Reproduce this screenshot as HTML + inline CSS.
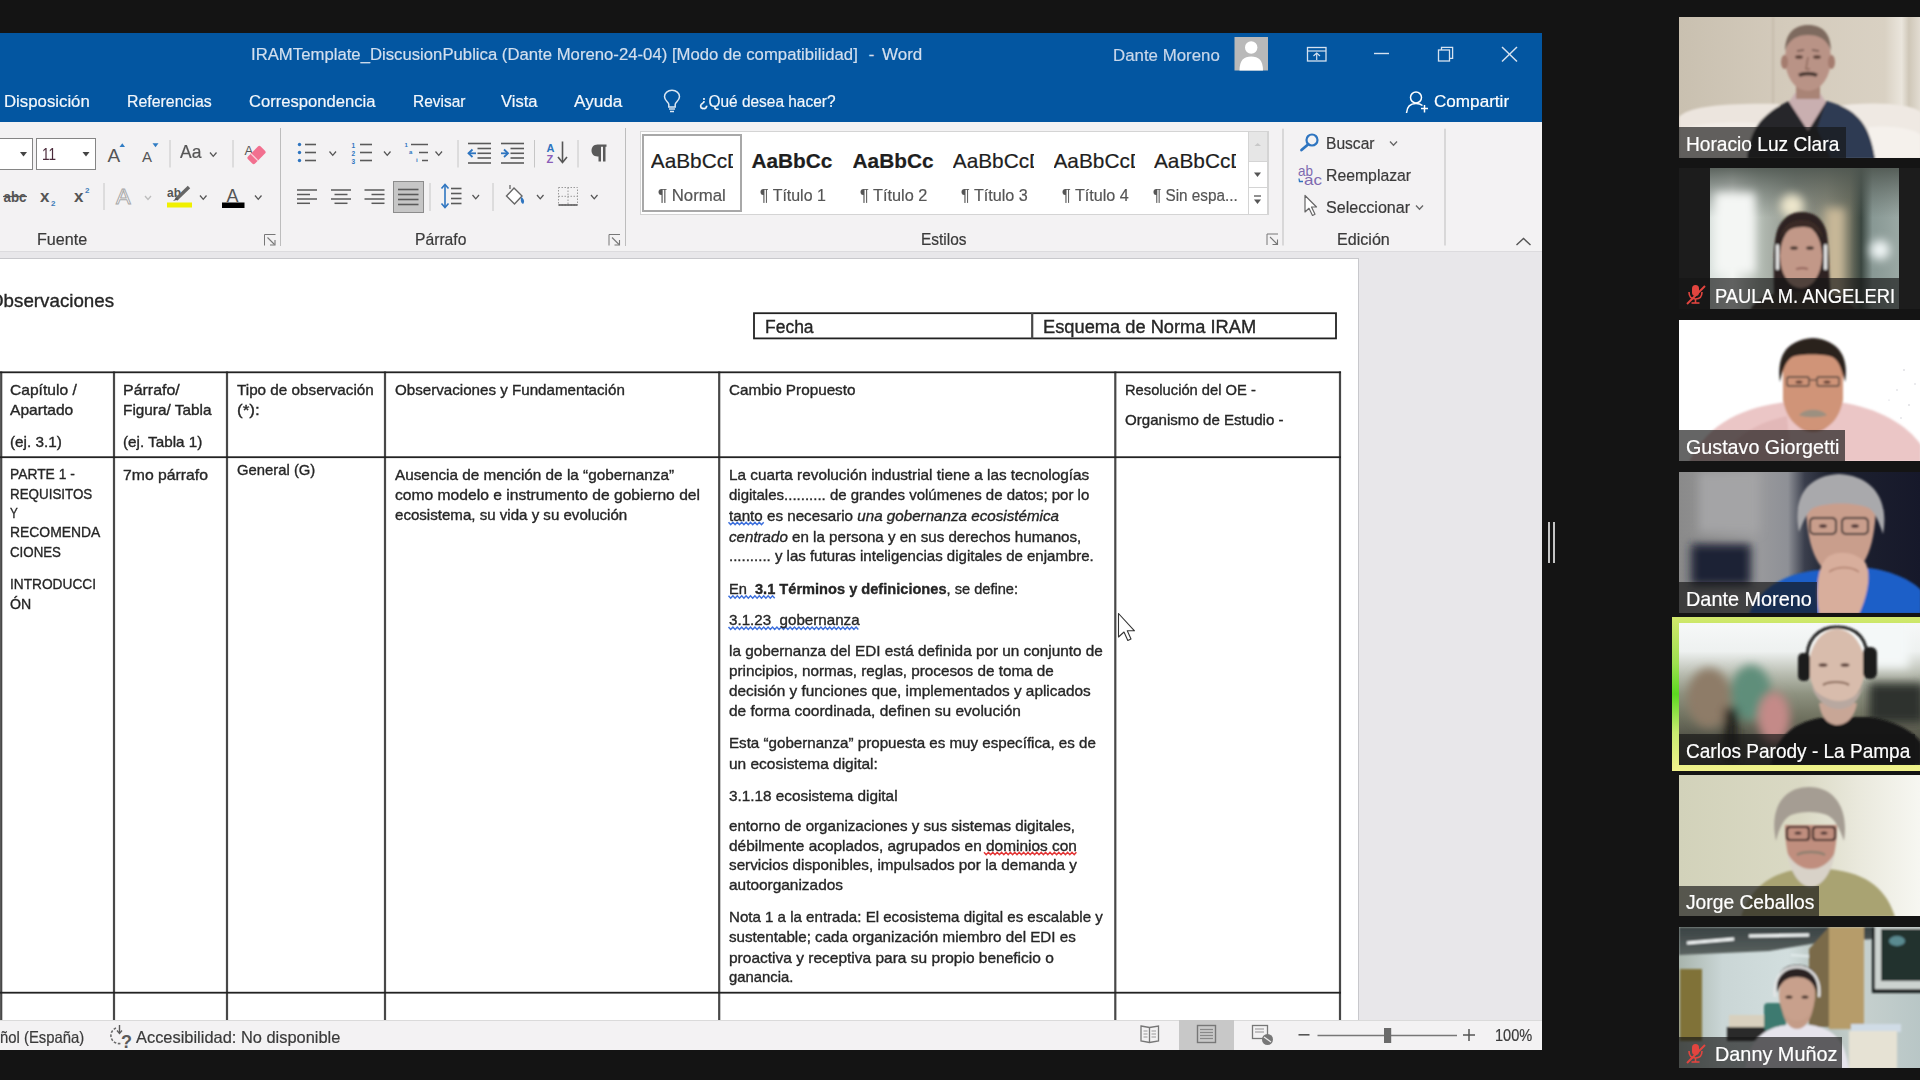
<!DOCTYPE html>
<html><head><meta charset="utf-8"><title>Zoom - Word</title>
<style>
*{margin:0;padding:0;box-sizing:border-box}
html,body{width:1920px;height:1080px;overflow:hidden}
body{background:#141414;position:relative;font-family:"Liberation Sans",sans-serif}
.a{position:absolute}
.t{position:absolute;white-space:nowrap;line-height:1;transform-origin:0 0}
svg{position:absolute;overflow:visible}
</style></head><body>

<!-- Word window -->
<div class="a" style="left:0;top:33px;width:1542px;height:89px;background:#0356A1"></div>
<div class="a" style="left:0;top:122px;width:1542px;height:129px;background:#F3F2F3"></div>
<div class="a" style="left:0;top:251px;width:1542px;height:2px;background:#DCDBDE"></div>
<div class="a" style="left:0;top:252px;width:1542px;height:768px;background:#E8E7EA"></div>
<div class="a" style="left:0;top:258px;width:1359px;height:762px;background:#FFFFFF;border-top:1px solid #C8C8CC;border-right:1px solid #C8C8CC"></div>
<div class="a" style="left:0;top:1020px;width:1542px;height:30px;background:#F3F2F3;border-top:1px solid #DADADA"></div>
<!-- status active view button -->
<div class="a" style="left:1179px;top:1020px;width:55px;height:30px;background:#C8C8C8"></div>
<!-- ribbon controls backgrounds -->
<div class="a" style="left:-4px;top:138px;width:37px;height:32px;background:#fff;border:1.5px solid #858585"></div>
<div class="a" style="left:36px;top:138px;width:60px;height:32px;background:#fff;border:1.5px solid #858585"></div>
<div class="a" style="left:639.5px;top:131px;width:629px;height:84px;background:#fff;border:1px solid #D4D4D4"></div>
<div class="a" style="left:642px;top:134px;width:100px;height:78px;background:#fff;border:2px solid #A8A8A8;box-shadow:inset 0 0 0 1px #fff"></div>
<div class="a" style="left:1248px;top:131px;width:20px;height:84px;background:#fff;border:1px solid #D4D4D4"></div>
<div class="a" style="left:1249px;top:132px;width:18px;height:29px;background:#E6E6E6"></div>
<div class="a" style="left:1248px;top:161px;width:20px;height:1px;background:#D4D4D4"></div>
<div class="a" style="left:1248px;top:187px;width:20px;height:1px;background:#D4D4D4"></div>
<div class="a" style="left:393px;top:181px;width:31px;height:32px;background:#C6C6C6;border:1px solid #8C8C8C"></div>
<svg class="a" style="left:0;top:0" width="1920" height="1080" viewBox="0 0 1920 1080"><rect x="1234.5" y="37" width="33.5" height="33.5" fill="#B9B9B9"/><circle cx="1251.2" cy="47.5" r="6.2" fill="#fff"/><path d="M1239.5 70.5 C1239.5 60 1244 56.5 1251.2 56.5 C1258.5 56.5 1263 60 1263 70.5 Z" fill="#fff"/><rect x="1307.5" y="47.5" width="18.5" height="13.5" fill="none" stroke="#D6E2F0" stroke-width="1.3"/><line x1="1307.5" y1="51" x2="1326" y2="51" stroke="#D6E2F0" stroke-width="1.2"/><polyline points="1313.5,56 1316.7,53 1320,56" fill="none" stroke="#D6E2F0" stroke-width="1.2"/><line x1="1316.7" y1="53" x2="1316.7" y2="60" stroke="#D6E2F0" stroke-width="1.2"/><line x1="1374" y1="53.5" x2="1389" y2="53.5" stroke="#D6E2F0" stroke-width="1.4"/><rect x="1438.5" y="50" width="11" height="11" fill="none" stroke="#D6E2F0" stroke-width="1.3"/><polyline points="1441.5,50 1441.5,47.3 1452.6,47.3 1452.6,58.3 1449.5,58.3" fill="none" stroke="#D6E2F0" stroke-width="1.3"/><line x1="1502" y1="47" x2="1517" y2="61.5" stroke="#D6E2F0" stroke-width="1.5"/><line x1="1517" y1="47" x2="1502" y2="61.5" stroke="#D6E2F0" stroke-width="1.5"/><circle cx="1416" cy="97.5" r="5.5" fill="none" stroke="#fff" stroke-width="1.5"/><path d="M1406.5 113 C1407 106 1410.5 103.5 1416 103.5 C1419 103.5 1421 104.3 1422.5 105.5" fill="none" stroke="#fff" stroke-width="1.5"/><line x1="1421" y1="108.5" x2="1428" y2="108.5" stroke="#fff" stroke-width="1.5"/><line x1="1424.5" y1="105" x2="1424.5" y2="112.5" stroke="#fff" stroke-width="1.5"/><path d="M668.8 107 L668.8 104.5 C668.8 102.5 664.5 100.5 664.5 96.8 C664.5 92.8 667.8 90.3 672 90.3 C676.2 90.3 679.5 92.8 679.5 96.8 C679.5 100.5 675.2 102.5 675.2 104.5 L675.2 107 Z" fill="none" stroke="#DCE7F3" stroke-width="1.5"/><line x1="669" y1="109" x2="675" y2="109" stroke="#DCE7F3" stroke-width="1.4"/><line x1="670" y1="111.5" x2="674" y2="111.5" stroke="#DCE7F3" stroke-width="1.5"/><polygon points="20,152 27,152 23.5,156.5" fill="#444"/><polygon points="82.5,152 89.5,152 86.0,156.5" fill="#444"/><text x="107.5" y="161.7" font-family="Liberation Sans" font-size="19" fill="#555">A</text><polygon points="119.5,147 122.3,143.2 125,147" fill="#2F7CC4"/><text x="142" y="161.7" font-family="Liberation Sans" font-size="15" fill="#555">A</text><polygon points="152.5,143.3 158.5,143.3 155.5,147.3" fill="#2F7CC4"/><line x1="170" y1="140" x2="170" y2="167.5" stroke="#C6C6C6" stroke-width="1"/><polyline points="210,152.5 213.25,156.3 216.5,152.5" fill="none" stroke="#555" stroke-width="1.3"/><line x1="233" y1="140" x2="233" y2="167.5" stroke="#C6C6C6" stroke-width="1"/><text x="244.5" y="155" font-family="Liberation Sans" font-size="13" fill="#555">A</text><g transform="translate(256.5,155) rotate(-45)"><rect x="-9" y="-5" width="18" height="10" rx="2" fill="#F2708F"/><line x1="-3" y1="-5" x2="-3" y2="5" stroke="#F9D0DA" stroke-width="1.3"/></g><line x1="280.5" y1="128" x2="280.5" y2="246" stroke="#BDBDBD" stroke-width="1"/><text x="3.5" y="202" font-family="Liberation Sans" font-size="14.5" font-weight="bold" fill="#555" textLength="23" lengthAdjust="spacingAndGlyphs">abc</text><line x1="3" y1="196.5" x2="27" y2="196.5" stroke="#555" stroke-width="1.2"/><text x="40" y="202" font-family="Liberation Sans" font-size="17" font-weight="bold" fill="#555">x</text><text x="51" y="205.5" font-family="Liberation Sans" font-size="8" font-weight="bold" fill="#3C7AB8">2</text><text x="74" y="202" font-family="Liberation Sans" font-size="17" font-weight="bold" fill="#555">x</text><text x="85" y="192.5" font-family="Liberation Sans" font-size="8" font-weight="bold" fill="#3C7AB8">2</text><line x1="104" y1="183" x2="104" y2="210" stroke="#C6C6C6" stroke-width="1"/><text x="116" y="204" font-family="Liberation Sans" font-size="22" fill="#fff" stroke="#A8A8A8" stroke-width="1">A</text><polyline points="145,196 148.0,199.5 151,196" fill="none" stroke="#BDBDBD" stroke-width="1.3"/><text x="167" y="197" font-family="Liberation Sans" font-size="12" font-weight="bold" fill="#555">ab</text><line x1="176" y1="199.5" x2="189" y2="187" stroke="#666" stroke-width="3.5"/><polygon points="173,201 176.5,197.5 178.5,199.5" fill="#555"/><rect x="167" y="202.5" width="25" height="5" fill="#F0F000"/><polyline points="200,195.5 203.25,199.3 206.5,195.5" fill="none" stroke="#555" stroke-width="1.3"/><text x="226.5" y="202" font-family="Liberation Sans" font-size="18" fill="#555">A</text><rect x="222" y="202.5" width="22.5" height="5.5" fill="#000"/><polyline points="255,195.5 258.25,199.3 261.5,195.5" fill="none" stroke="#555" stroke-width="1.3"/><polyline points="264.5,245.5 264.5,234.5 275.5,234.5" fill="none" stroke="#777" stroke-width="1"/><line x1="267.5" y1="237.5" x2="274.5" y2="244.5" stroke="#777" stroke-width="1.1"/><polyline points="270.0,245.0 275.0,245.0 275.0,240.0" fill="none" stroke="#777" stroke-width="1.1"/><polyline points="609,245.5 609,234.5 620,234.5" fill="none" stroke="#777" stroke-width="1"/><line x1="612" y1="237.5" x2="619" y2="244.5" stroke="#777" stroke-width="1.1"/><polyline points="614.5,245.0 619.5,245.0 619.5,240.0" fill="none" stroke="#777" stroke-width="1.1"/><polyline points="1267,245 1267,234 1278,234" fill="none" stroke="#777" stroke-width="1"/><line x1="1270" y1="237" x2="1277" y2="244" stroke="#777" stroke-width="1.1"/><polyline points="1272.5,244.5 1277.5,244.5 1277.5,239.5" fill="none" stroke="#777" stroke-width="1.1"/><circle cx="299.5" cy="144.5" r="1.7" fill="#2E75C0"/><circle cx="299.5" cy="152.5" r="1.7" fill="#2E75C0"/><circle cx="299.5" cy="160.5" r="1.7" fill="#2E75C0"/><line x1="305" y1="144.5" x2="316" y2="144.5" stroke="#5a5a5a" stroke-width="1.6"/><line x1="305" y1="152.5" x2="316" y2="152.5" stroke="#5a5a5a" stroke-width="1.6"/><line x1="305" y1="160.5" x2="316" y2="160.5" stroke="#5a5a5a" stroke-width="1.6"/><polyline points="329.5,151.5 332.75,155.3 336.0,151.5" fill="none" stroke="#555" stroke-width="1.3"/><text x="351.5" y="148" font-family="Liberation Sans" font-size="6.5" font-weight="bold" fill="#2E75C0">1</text><text x="351.5" y="156" font-family="Liberation Sans" font-size="6.5" font-weight="bold" fill="#2E75C0">2</text><text x="351.5" y="163.5" font-family="Liberation Sans" font-size="6.5" font-weight="bold" fill="#2E75C0">3</text><line x1="360" y1="144.5" x2="372" y2="144.5" stroke="#5a5a5a" stroke-width="1.6"/><line x1="360" y1="152.5" x2="372" y2="152.5" stroke="#5a5a5a" stroke-width="1.6"/><line x1="360" y1="160.5" x2="372" y2="160.5" stroke="#5a5a5a" stroke-width="1.6"/><polyline points="384,151.5 387.25,155.3 390.5,151.5" fill="none" stroke="#555" stroke-width="1.3"/><text x="404.5" y="147" font-family="Liberation Sans" font-size="6" font-weight="bold" fill="#2E75C0">1</text><text x="409" y="154" font-family="Liberation Sans" font-size="6" font-weight="bold" fill="#2E75C0">a</text><text x="416" y="162" font-family="Liberation Sans" font-size="6" font-weight="bold" fill="#2E75C0">i</text><line x1="411" y1="144.5" x2="428" y2="144.5" stroke="#5a5a5a" stroke-width="1.5"/><line x1="419" y1="152.5" x2="428" y2="152.5" stroke="#5a5a5a" stroke-width="1.5"/><line x1="422" y1="160.5" x2="428" y2="160.5" stroke="#5a5a5a" stroke-width="1.5"/><polyline points="435.5,151.5 438.75,155.3 442.0,151.5" fill="none" stroke="#555" stroke-width="1.3"/><line x1="458" y1="140" x2="458" y2="167.5" stroke="#C6C6C6" stroke-width="1"/><line x1="468" y1="143.5" x2="491" y2="143.5" stroke="#5a5a5a" stroke-width="1.6"/><line x1="468" y1="163" x2="491" y2="163" stroke="#5a5a5a" stroke-width="1.6"/><line x1="477.5" y1="148.5" x2="491" y2="148.5" stroke="#5a5a5a" stroke-width="1.6"/><line x1="477.5" y1="153.3" x2="491" y2="153.3" stroke="#5a5a5a" stroke-width="1.6"/><line x1="477.5" y1="158" x2="491" y2="158" stroke="#5a5a5a" stroke-width="1.6"/><polyline points="472.5,149.5 468.5,153.3 472.5,157" fill="none" stroke="#2E75C0" stroke-width="1.8"/><line x1="468.5" y1="153.3" x2="476" y2="153.3" stroke="#2E75C0" stroke-width="1.8"/><line x1="501" y1="143.5" x2="524" y2="143.5" stroke="#5a5a5a" stroke-width="1.6"/><line x1="501" y1="163" x2="524" y2="163" stroke="#5a5a5a" stroke-width="1.6"/><line x1="510.5" y1="148.5" x2="524" y2="148.5" stroke="#5a5a5a" stroke-width="1.6"/><line x1="510.5" y1="153.3" x2="524" y2="153.3" stroke="#5a5a5a" stroke-width="1.6"/><line x1="510.5" y1="158" x2="524" y2="158" stroke="#5a5a5a" stroke-width="1.6"/><polyline points="504,149.5 508,153.3 504,157" fill="none" stroke="#2E75C0" stroke-width="1.8"/><line x1="501" y1="153.3" x2="508" y2="153.3" stroke="#2E75C0" stroke-width="1.8"/><line x1="534.5" y1="140" x2="534.5" y2="167.5" stroke="#C6C6C6" stroke-width="1"/><text x="546.5" y="152" font-family="Liberation Sans" font-size="11" font-weight="bold" fill="#2E75C0">A</text><text x="546.5" y="163" font-family="Liberation Sans" font-size="11" font-weight="bold" fill="#8A5DB8">Z</text><line x1="562.5" y1="141.5" x2="562.5" y2="162" stroke="#555" stroke-width="1.6"/><polyline points="558,157 562.5,162.5 567,157" fill="none" stroke="#555" stroke-width="1.6"/><line x1="578" y1="140" x2="578" y2="167.5" stroke="#C6C6C6" stroke-width="1"/><path d="M606.5 144.5 L597.5 144.5 C593.5 144.5 591.5 147.3 591.5 150.5 C591.5 153.7 593.5 156.5 597.5 156.5 L598.5 156.5 L598.5 161.5 L601 161.5 L601 146.8 L603 146.8 L603 161.5 L605.5 161.5 L605.5 146.8 L606.5 146.8 Z" fill="#5a5a5a"/><line x1="625.5" y1="128" x2="625.5" y2="246" stroke="#BDBDBD" stroke-width="1"/><line x1="297" y1="190" x2="317" y2="190" stroke="#5a5a5a" stroke-width="1.5"/><line x1="297" y1="194.5" x2="310" y2="194.5" stroke="#5a5a5a" stroke-width="1.5"/><line x1="297" y1="199" x2="317" y2="199" stroke="#5a5a5a" stroke-width="1.5"/><line x1="297" y1="203.3" x2="310" y2="203.3" stroke="#5a5a5a" stroke-width="1.5"/><line x1="331" y1="190" x2="351" y2="190" stroke="#5a5a5a" stroke-width="1.5"/><line x1="334.5" y1="194.5" x2="347.5" y2="194.5" stroke="#5a5a5a" stroke-width="1.5"/><line x1="331" y1="199" x2="351" y2="199" stroke="#5a5a5a" stroke-width="1.5"/><line x1="334.5" y1="203.3" x2="347.5" y2="203.3" stroke="#5a5a5a" stroke-width="1.5"/><line x1="364.5" y1="190" x2="384.5" y2="190" stroke="#5a5a5a" stroke-width="1.5"/><line x1="371.5" y1="194.5" x2="384.5" y2="194.5" stroke="#5a5a5a" stroke-width="1.5"/><line x1="364.5" y1="199" x2="384.5" y2="199" stroke="#5a5a5a" stroke-width="1.5"/><line x1="371.5" y1="203.3" x2="384.5" y2="203.3" stroke="#5a5a5a" stroke-width="1.5"/><line x1="398" y1="189.5" x2="418.5" y2="189.5" stroke="#5a5a5a" stroke-width="1.6"/><line x1="398" y1="194.5" x2="418.5" y2="194.5" stroke="#5a5a5a" stroke-width="1.6"/><line x1="398" y1="199.5" x2="418.5" y2="199.5" stroke="#5a5a5a" stroke-width="1.6"/><line x1="398" y1="204.5" x2="418.5" y2="204.5" stroke="#5a5a5a" stroke-width="1.6"/><line x1="430" y1="183" x2="430" y2="211" stroke="#C6C6C6" stroke-width="1"/><line x1="445" y1="185" x2="445" y2="207" stroke="#2E75C0" stroke-width="1.6"/><polyline points="441.5,188.5 445,184.5 448.5,188.5" fill="none" stroke="#2E75C0" stroke-width="1.6"/><polyline points="441.5,203.5 445,207.5 448.5,203.5" fill="none" stroke="#2E75C0" stroke-width="1.6"/><line x1="451" y1="188.5" x2="461.5" y2="188.5" stroke="#5a5a5a" stroke-width="1.6"/><line x1="451" y1="193.5" x2="461.5" y2="193.5" stroke="#5a5a5a" stroke-width="1.6"/><line x1="451" y1="198.5" x2="461.5" y2="198.5" stroke="#5a5a5a" stroke-width="1.6"/><line x1="451" y1="203.5" x2="461.5" y2="203.5" stroke="#5a5a5a" stroke-width="1.6"/><polyline points="472.5,195 475.75,198.8 479.0,195" fill="none" stroke="#555" stroke-width="1.3"/><line x1="493" y1="183" x2="493" y2="211" stroke="#C6C6C6" stroke-width="1"/><path d="M506.5 196 L514 188 L522 196 L514.5 204 Z" fill="#fff" stroke="#666" stroke-width="1.4"/><path d="M510 189 L510 185" stroke="#666" stroke-width="1.3"/><path d="M521.5 197 C524 199 525 202 523 204 C521 203 520 200 521.5 197 Z" fill="#2E75C0"/><polyline points="537,195 540.25,198.8 543.5,195" fill="none" stroke="#555" stroke-width="1.3"/><rect x="558.5" y="187.5" width="19" height="17.5" fill="none" stroke="#9A9A9A" stroke-width="1" stroke-dasharray="1.5,1.5"/><line x1="568" y1="187.5" x2="568" y2="205" stroke="#9A9A9A" stroke-width="1" stroke-dasharray="1.5,1.5"/><line x1="558.5" y1="196.3" x2="577.5" y2="196.3" stroke="#9A9A9A" stroke-width="1" stroke-dasharray="1.5,1.5"/><line x1="558.5" y1="205" x2="577.5" y2="205" stroke="#555" stroke-width="1.5"/><polyline points="591,195 594.25,198.8 597.5,195" fill="none" stroke="#555" stroke-width="1.3"/><polygon points="1254.5,146 1257.7,143 1261,146" fill="#C8C8C8"/><polygon points="1254,172.5 1261,172.5 1257.5,177.0" fill="#555"/><line x1="1254" y1="196" x2="1261" y2="196" stroke="#555" stroke-width="1.3"/><polygon points="1254,199.5 1261,199.5 1257.5,204.0" fill="#555"/><line x1="1283" y1="128.7" x2="1283" y2="245.5" stroke="#BDBDBD" stroke-width="1"/><circle cx="1312" cy="140" r="5.5" fill="none" stroke="#2E75C0" stroke-width="2.2"/><line x1="1308" y1="144.5" x2="1301.5" y2="150" stroke="#2E75C0" stroke-width="2.8" stroke-linecap="round"/><polyline points="1390,141.5 1393.5,145.3 1397,141.5" fill="none" stroke="#666" stroke-width="1.3"/><text x="1298" y="175.5" font-family="Liberation Sans" font-size="14.5" fill="#7E6AB0" textLength="15" lengthAdjust="spacingAndGlyphs">ab</text><text x="1304" y="185" font-family="Liberation Sans" font-size="14.5" fill="#7E6AB0" textLength="18" lengthAdjust="spacingAndGlyphs">ac</text><polyline points="1299,178.5 1299.5,181.5 1303,181.5" fill="none" stroke="#2E75C0" stroke-width="1.3"/><path d="M1305 195.5 L1305 212 L1309 208.3 L1312.5 215.5 L1315 214.3 L1311.5 207 L1316.5 207 Z" fill="#fff" stroke="#666" stroke-width="1.2" stroke-linejoin="round"/><polyline points="1416,205.5 1419.5,209.3 1423,205.5" fill="none" stroke="#666" stroke-width="1.3"/><line x1="1445" y1="128.7" x2="1445" y2="245.5" stroke="#BDBDBD" stroke-width="1"/><polyline points="1516.5,245 1523.5,238.5 1530.5,245" fill="none" stroke="#555" stroke-width="1.4"/><rect x="754" y="313.2" width="582" height="25.2" fill="none" stroke="#222" stroke-width="1.8"/><rect x="1031.1000000000001" y="313" width="2.2" height="25.5" fill="#484848"/><rect x="0.09999999999999987" y="371.5" width="2.2" height="648.5" fill="#484848"/><rect x="112.9" y="371.5" width="2.2" height="648.5" fill="#484848"/><rect x="225.9" y="371.5" width="2.2" height="648.5" fill="#484848"/><rect x="383.9" y="371.5" width="2.2" height="648.5" fill="#484848"/><rect x="718.1" y="371.5" width="2.2" height="648.5" fill="#484848"/><rect x="1114.2" y="371.5" width="2.2" height="648.5" fill="#484848"/><rect x="1338.9" y="371.5" width="2.2" height="648.5" fill="#484848"/><rect x="0" y="371.40000000000003" width="1341" height="1.8" fill="#222"/><rect x="0" y="456.3" width="1341" height="1.8" fill="#222"/><rect x="0" y="991.8000000000001" width="1341" height="1.8" fill="#222"/><polyline points="728.5,522.3 730.7,524.7 732.9,522.3 735.1,524.7 737.3,522.3 739.5,524.7 741.7,522.3 743.9,524.7 746.1,522.3 748.3,524.7 750.5,522.3 752.7,524.7 754.9,522.3 757.1,524.7 759.3,522.3 761.5,524.7 763.7,522.3" fill="none" stroke="#3C6FDC" stroke-width="1.5"/><polyline points="728.5,595.8 730.7,598.2 732.9,595.8 735.1,598.2 737.3,595.8 739.5,598.2 741.7,595.8 743.9,598.2 746.1,595.8 748.3,598.2 750.5,595.8 752.7,598.2 754.9,595.8 757.1,598.2 759.3,595.8 761.5,598.2 763.7,595.8 765.9,598.2 768.1,595.8 770.3,598.2 772.5,595.8 774.7,598.2" fill="none" stroke="#3C6FDC" stroke-width="1.5"/><polyline points="728.5,627.0 730.7,629.4 732.9,627.0 735.1,629.4 737.3,627.0 739.5,629.4 741.7,627.0 743.9,629.4 746.1,627.0 748.3,629.4 750.5,627.0 752.7,629.4 754.9,627.0 757.1,629.4 759.3,627.0 761.5,629.4 763.7,627.0 765.9,629.4 768.1,627.0 770.3,629.4 772.5,627.0 774.7,629.4 776.9,627.0 779.1,629.4 781.3,627.0 783.5,629.4 785.7,627.0 787.9,629.4 790.1,627.0 792.3,629.4 794.5,627.0 796.7,629.4 798.9,627.0 801.1,629.4 803.3,627.0 805.5,629.4 807.7,627.0 809.9,629.4 812.1,627.0 814.3,629.4 816.5,627.0 818.7,629.4 820.9,627.0 823.1,629.4 825.3,627.0 827.5,629.4 829.7,627.0 831.9,629.4 834.1,627.0 836.3,629.4 838.5,627.0 840.7,629.4 842.9,627.0 845.1,629.4 847.3,627.0 849.5,629.4 851.7,627.0 853.9,629.4 856.1,627.0 858.3,629.4" fill="none" stroke="#3C6FDC" stroke-width="1.5"/><polyline points="984.0,852.3 986.2,854.7 988.4,852.3 990.6,854.7 992.8,852.3 995.0,854.7 997.2,852.3 999.4,854.7 1001.6,852.3 1003.8,854.7 1006.0,852.3 1008.2,854.7 1010.4,852.3 1012.6,854.7 1014.8,852.3 1017.0,854.7 1019.2,852.3 1021.4,854.7 1023.6,852.3 1025.8,854.7 1028.0,852.3 1030.2,854.7 1032.4,852.3 1034.6,854.7 1036.8,852.3 1039.0,854.7 1041.2,852.3 1043.4,854.7 1045.6,852.3 1047.8,854.7 1050.0,852.3 1052.2,854.7 1054.4,852.3 1056.6,854.7 1058.8,852.3 1061.0,854.7 1063.2,852.3 1065.4,854.7 1067.6,852.3 1069.8,854.7 1072.0,852.3 1074.2,854.7 1076.4,852.3" fill="none" stroke="#E23434" stroke-width="1.5"/><path d="M1118.5 613.5 L1118.5 637 L1124 632 L1127.8 640.5 L1131 639 L1127.3 630.8 L1134.5 630.8 Z" fill="#fff" stroke="#333" stroke-width="1.1" stroke-linejoin="round"/><path d="M116 1028 A8 8 0 1 0 122 1043" fill="none" stroke="#6a6a6a" stroke-width="1.6" stroke-dasharray="2.6,1.6"/><line x1="119.5" y1="1025" x2="119.5" y2="1033" stroke="#5a5a5a" stroke-width="1.4"/><polyline points="117,1030.5 119.5,1033.5 122,1030.5" fill="none" stroke="#5a5a5a" stroke-width="1.3"/><text x="121" y="1047.5" font-family="Liberation Sans" font-size="18" font-weight="bold" fill="#5a5a5a">?</text><path d="M1141 1026 L1149.5 1027.5 L1158.5 1026 L1158.5 1041 L1149.5 1042.5 L1141 1041 Z" fill="none" stroke="#777" stroke-width="1.3"/><line x1="1149.5" y1="1027.5" x2="1149.5" y2="1043" stroke="#777" stroke-width="1.3"/><line x1="1143.5" y1="1031" x2="1147.5" y2="1031" stroke="#999" stroke-width="1"/><line x1="1143.5" y1="1034" x2="1147.5" y2="1034" stroke="#999" stroke-width="1"/><line x1="1143.5" y1="1037" x2="1147.5" y2="1037" stroke="#999" stroke-width="1"/><line x1="1151.5" y1="1031" x2="1156" y2="1031" stroke="#999" stroke-width="1"/><line x1="1151.5" y1="1034" x2="1156" y2="1034" stroke="#999" stroke-width="1"/><line x1="1151.5" y1="1037" x2="1156" y2="1037" stroke="#999" stroke-width="1"/><rect x="1197.5" y="1025.5" width="18" height="17" fill="none" stroke="#777" stroke-width="1.4"/><line x1="1200" y1="1029.5" x2="1213" y2="1029.5" stroke="#888" stroke-width="1.2"/><line x1="1200" y1="1032.5" x2="1213" y2="1032.5" stroke="#888" stroke-width="1.2"/><line x1="1200" y1="1035.5" x2="1213" y2="1035.5" stroke="#888" stroke-width="1.2"/><line x1="1200" y1="1038.5" x2="1213" y2="1038.5" stroke="#888" stroke-width="1.2"/><rect x="1252.5" y="1025.5" width="15" height="13" fill="none" stroke="#777" stroke-width="1.3"/><line x1="1255" y1="1029" x2="1264" y2="1029" stroke="#999" stroke-width="1.1"/><line x1="1255" y1="1032" x2="1264" y2="1032" stroke="#999" stroke-width="1.1"/><circle cx="1267.5" cy="1039.5" r="5.5" fill="#777"/><path d="M1264 1037 L1271 1042" stroke="#eee" stroke-width="1.2"/><line x1="1298.5" y1="1034.8" x2="1309.5" y2="1034.8" stroke="#555" stroke-width="1.6"/><line x1="1317.5" y1="1035.5" x2="1457" y2="1035.5" stroke="#777" stroke-width="1.3"/><rect x="1384" y="1028" width="7.2" height="15" fill="#6a6a6a"/><line x1="1463" y1="1035" x2="1475" y2="1035" stroke="#555" stroke-width="1.5"/><line x1="1469" y1="1029" x2="1469" y2="1041" stroke="#555" stroke-width="1.5"/></svg><div class="a" style="left:1678.6px;top:16.7px;width:241.4000000000001px;height:141.2px;overflow:hidden;background:#1C1C1C"><svg class="a" style="left:0;top:0" width="242" height="142" viewBox="0 0 242 142"><defs><filter id="bl1" x="-20%" y="-20%" width="140%" height="140%"><feGaussianBlur stdDeviation="0.9"/></filter><filter id="bb1" x="-50%" y="-50%" width="200%" height="200%"><feGaussianBlur stdDeviation="5"/></filter></defs><defs><linearGradient id="w1" x1="0" x2="1" y1="0" y2="0">
<stop offset="0" stop-color="#C9C0B0"/><stop offset="0.5" stop-color="#D5CCBD"/><stop offset="0.85" stop-color="#D9D1C3"/>
<stop offset="0.92" stop-color="#EAE5DC"/><stop offset="0.95" stop-color="#CFC7B8"/><stop offset="1" stop-color="#E4DED4"/></linearGradient></defs>
<rect width="242" height="142" fill="url(#w1)"/>
<g filter="url(#bl1)">
<line x1="94" y1="0" x2="94" y2="90" stroke="#B8AE9E" stroke-width="1"/>
<path d="M0 100 C10 90 40 86 100 87 L104 142 L0 142 Z" fill="#ECE5DE"/>
<path d="M0 112 C30 104 70 104 100 108 L100 142 L0 142Z" fill="#F2ECE6"/>
<path d="M150 90 C190 84 230 86 242 95 L242 142 L160 142 Z" fill="#EFE9E3"/>
<path d="M190 110 C215 108 235 112 242 118 L242 142 L190 142Z" fill="#F5F1EC"/>
<path d="M68 142 C70 112 84 96 110 84 L129 112 L147 84 C176 92 190 104 196 142 Z" fill="#28262A"/>
<path d="M147 84 C176 92 190 104 196 142 L152 142 L138 112 Z" fill="#2F3B52"/>
<path d="M110 85 L129 114 L147 85 L141 76 L116 76 Z" fill="#C9AFB0"/>
<rect x="117" y="62" width="24" height="20" fill="#A98476"/>
<ellipse cx="129" cy="42" rx="23" ry="32" fill="#B99386"/>
<path d="M106 34 C106 14 118 8 129 8 C141 8 152 14 152 34 C148 22 140 18 129 18 C118 18 110 22 106 34Z" fill="#7E6A5E"/>
<ellipse cx="105.5" cy="45" rx="3.5" ry="7" fill="#A47C6E"/><ellipse cx="152.5" cy="45" rx="3.5" ry="7" fill="#A47C6E"/>
<ellipse cx="120" cy="40" rx="4" ry="1.8" fill="#5a4036"/><ellipse cx="138" cy="40" rx="4" ry="1.8" fill="#5a4036"/>
<path d="M118 34 L125 33 M133 33 L140 34" stroke="#6A5046" stroke-width="1.5"/>
<path d="M129 40 L127 52 L131 52" fill="none" stroke="#8E6A5C" stroke-width="1.5"/>
<path d="M119 57 C124 54 134 54 139 57 L137 60 C133 58 125 58 121 60Z" fill="#4A3830"/>
</g></svg><div class="a" style="left:0;top:110.69999999999999px;width:167px;height:30.5px;background:rgba(22,22,22,0.66)"></div></div><div class="a" style="left:1678.6px;top:167.7px;width:241.4000000000001px;height:141.2px;overflow:hidden;background:#1C1C1C"><div class="a" style="left:31.4px;top:0;width:189px;height:142px;overflow:hidden"><svg class="a" style="left:0;top:0" width="189" height="142" viewBox="0 0 189 142"><defs><filter id="bl2" x="-20%" y="-20%" width="140%" height="140%"><feGaussianBlur stdDeviation="0.9"/></filter><filter id="bb2" x="-50%" y="-50%" width="200%" height="200%"><feGaussianBlur stdDeviation="5"/></filter></defs><defs><linearGradient id="w2" x1="0" x2="1" y1="0" y2="0">
<stop offset="0" stop-color="#D8E0DC"/><stop offset="0.12" stop-color="#F2F5F2"/><stop offset="0.26" stop-color="#B4BCB4"/>
<stop offset="0.45" stop-color="#8E938A"/><stop offset="0.62" stop-color="#8C8C7C"/><stop offset="0.74" stop-color="#6E7060"/>
<stop offset="0.8" stop-color="#3A4640"/><stop offset="0.86" stop-color="#889894"/><stop offset="1" stop-color="#9AA8A4"/></linearGradient>
<linearGradient id="v2" x1="0" x2="0" y1="0" y2="1"><stop offset="0" stop-color="#4E5650" stop-opacity="0.9"/><stop offset="0.35" stop-color="#5E6660" stop-opacity="0"/></linearGradient></defs>
<rect width="189" height="142" fill="url(#w2)"/><rect width="189" height="142" fill="url(#v2)"/>
<g filter="url(#bb2)"><circle cx="82" cy="38" r="12" fill="#EDE6CC"/><rect x="5" y="25" width="40" height="80" fill="#F4F6F4"/><circle cx="170" cy="82" r="10" fill="#F0F6F6"/><rect x="115" y="40" width="20" height="90" fill="#C8B898"/></g>
<g filter="url(#bl2)">
<path d="M64 142 C64 110 62 74 68 60 C74 48 82 44 92 44 C104 44 112 50 116 62 C120 76 118 110 122 142Z" fill="#2E2420"/>
<path d="M40 142 C48 128 62 124 92 124 C120 124 136 128 146 142Z" fill="#3A302C"/>
<ellipse cx="91" cy="88" rx="21" ry="32" fill="#C29888"/>
<path d="M70 70 C74 54 84 52 92 52 C102 52 110 56 113 70 C106 60 98 59 92 59 C84 59 76 62 70 70Z" fill="#3A2C26"/>
<ellipse cx="84" cy="80" rx="4" ry="1.8" fill="#4a3830"/><ellipse cx="100" cy="80" rx="4" ry="1.8" fill="#4a3830"/>
<path d="M86 101 C90 100 95 100 98 101" stroke="#8A5A52" stroke-width="1.6" fill="none"/>
<rect x="66" y="76" width="3" height="26" rx="1.5" fill="#E4E4E4"/><rect x="114" y="76" width="3" height="26" rx="1.5" fill="#E4E4E4"/>
</g></svg></div><div class="a" style="left:0;top:110.69999999999999px;width:220.5px;height:30.5px;background:rgba(22,22,22,0.66)"></div><svg class="a" style="left:5px;top:115.19999999999999px" width="24" height="22" viewBox="0 0 24 22"><rect x="8" y="2" width="7" height="11" rx="3.5" fill="#E2453F"/><path d="M5 9 C5 14 8 16 11.5 16 C15 16 18 14 18 9" fill="none" stroke="#E2453F" stroke-width="1.6"/><line x1="11.5" y1="16" x2="11.5" y2="20" stroke="#E2453F" stroke-width="1.6"/><line x1="7.5" y1="20" x2="15.5" y2="20" stroke="#E2453F" stroke-width="1.6"/><line x1="3" y1="21" x2="21" y2="3" stroke="#E2453F" stroke-width="2"/></svg></div><div class="a" style="left:1678.6px;top:319.7px;width:241.4000000000001px;height:141.2px;overflow:hidden;background:#1C1C1C"><svg class="a" style="left:0;top:0" width="242" height="142" viewBox="0 0 242 142"><defs><filter id="bl3" x="-20%" y="-20%" width="140%" height="140%"><feGaussianBlur stdDeviation="0.9"/></filter><filter id="bb3" x="-50%" y="-50%" width="200%" height="200%"><feGaussianBlur stdDeviation="5"/></filter></defs><rect width="242" height="142" fill="#FFFFFF"/>
<g filter="url(#bl3)">
<path d="M10 142 C30 100 70 86 108 82 L160 82 C200 88 228 105 242 125 L242 142 Z" fill="#EBC6C6"/>
<path d="M40 142 C55 115 80 102 108 96 L112 142Z" fill="#E2B8B8"/>
<path d="M108 84 C110 100 120 112 134 112 C148 112 158 100 160 84 Z" fill="#C88A72"/>
<path d="M104 50 C104 30 114 20 134 20 C154 20 164 30 164 50 L164 80 C160 100 150 110 134 110 C118 110 108 100 104 80Z" fill="#D09478"/>
<path d="M101 62 C98 40 104 20 134 18 C162 20 170 40 166 62 C162 48 160 38 150 36 C140 34 126 34 116 36 C108 38 104 48 101 62Z" fill="#29221E"/>
<rect x="108" y="57" width="22" height="9" rx="2" fill="none" stroke="#6A544A" stroke-width="1.8"/>
<rect x="138" y="57" width="22" height="9" rx="2" fill="none" stroke="#6A544A" stroke-width="1.8"/>
<line x1="130" y1="60" x2="138" y2="60" stroke="#6A544A" stroke-width="1.5"/>
<ellipse cx="120" cy="62" rx="3.5" ry="1.5" fill="#5A3A30"/><ellipse cx="148" cy="62" rx="3.5" ry="1.5" fill="#5A3A30"/>
<path d="M120 95 C126 88 142 88 148 95 C144 98 124 98 120 95Z" fill="#9C9080"/>
</g>
<g fill="#C8C8D0"><circle cx="225" cy="50" r="0.8"/><circle cx="218" cy="70" r="0.7"/><circle cx="230" cy="85" r="0.8"/><circle cx="210" cy="80" r="0.6"/><circle cx="236" cy="64" r="0.7"/><circle cx="222" cy="98" r="0.7"/></g></svg><div class="a" style="left:0;top:110.69999999999999px;width:166.5px;height:30.5px;background:rgba(22,22,22,0.66)"></div></div><div class="a" style="left:1678.6px;top:471.7px;width:241.4000000000001px;height:141.2px;overflow:hidden;background:#1C1C1C"><svg class="a" style="left:0;top:0" width="242" height="142" viewBox="0 0 242 142"><defs><filter id="bl4" x="-20%" y="-20%" width="140%" height="140%"><feGaussianBlur stdDeviation="0.9"/></filter><filter id="bb4" x="-50%" y="-50%" width="200%" height="200%"><feGaussianBlur stdDeviation="5"/></filter></defs><defs><linearGradient id="w4" x1="0" x2="1" y1="0" y2="0">
<stop offset="0" stop-color="#8A8A8A"/><stop offset="0.3" stop-color="#9C9C9E"/><stop offset="0.45" stop-color="#8E9096"/>
<stop offset="0.52" stop-color="#3A3E4C"/><stop offset="0.62" stop-color="#1E2230"/><stop offset="1" stop-color="#16182A"/></linearGradient></defs>
<rect width="242" height="142" fill="url(#w4)"/>
<g filter="url(#bb4)"><rect x="12" y="72" width="60" height="42" fill="#1A2234"/><rect x="20" y="0" width="60" height="60" fill="#A4A4A6"/></g>
<g filter="url(#bl4)">
<path d="M70 142 C80 115 110 100 140 98 L190 96 C220 100 236 112 242 118 L242 142Z" fill="#1F5FC8"/>
<path d="M127 28 C127 78 140 104 162 104 C184 104 197 78 197 28 Z" fill="#C99E8C"/>
<path d="M120 60 C114 30 124 4 160 2 C196 4 210 30 204 62 C200 50 196 40 190 36 C176 30 148 30 134 36 C128 40 124 50 120 60Z" fill="#A9A9AC"/>
<rect x="131" y="46" width="26" height="16" rx="4" fill="none" stroke="#3A3232" stroke-width="2"/>
<rect x="163" y="46" width="26" height="16" rx="4" fill="none" stroke="#3A3232" stroke-width="2"/>
<ellipse cx="144" cy="54" rx="4" ry="1.8" fill="#4a3232"/><ellipse cx="176" cy="54" rx="4" ry="1.8" fill="#4a3232"/>
<path d="M140 142 C136 120 138 92 150 84 C160 78 176 80 186 90 C192 100 190 120 180 142Z" fill="#D8AE9C"/>
<path d="M150 100 C158 94 172 94 180 100" stroke="#B0806E" stroke-width="1.5" fill="none"/>
</g></svg><div class="a" style="left:0;top:110.69999999999999px;width:138.8px;height:30.5px;background:rgba(22,22,22,0.66)"></div></div><div class="a" style="left:1672.1px;top:616.6px;width:250px;height:154.7px;background:linear-gradient(180deg,#D2E86C 0%,#9EE050 30%,#5CD820 50%,#C8EC70 75%,#F2F28C 100%)"></div><div class="a" style="left:1678.9px;top:623.4px;width:241.0999999999999px;height:141.6px;overflow:hidden;background:#1C1C1C"><svg class="a" style="left:0;top:0" width="242" height="142" viewBox="0 0 242 142"><defs><filter id="bl5" x="-20%" y="-20%" width="140%" height="140%"><feGaussianBlur stdDeviation="0.9"/></filter><filter id="bb5" x="-50%" y="-50%" width="200%" height="200%"><feGaussianBlur stdDeviation="5"/></filter></defs><defs><linearGradient id="w5" x1="0" x2="0" y1="0" y2="1">
<stop offset="0" stop-color="#F6F8F8"/><stop offset="0.2" stop-color="#EEF1F0"/><stop offset="0.36" stop-color="#B8BCB0"/>
<stop offset="0.5" stop-color="#8E9280"/><stop offset="0.66" stop-color="#707260"/><stop offset="0.82" stop-color="#505046"/><stop offset="1" stop-color="#3E3E38"/></linearGradient></defs>
<rect width="242" height="142" fill="url(#w5)"/>
<g filter="url(#bb5)"><ellipse cx="30" cy="75" rx="22" ry="30" fill="#8E7C68"/><ellipse cx="72" cy="70" rx="20" ry="28" fill="#5E8E7A"/><ellipse cx="95" cy="95" rx="16" ry="26" fill="#C48A88"/>
<rect x="45" y="85" width="14" height="55" fill="#20241E"/><rect x="190" y="60" width="55" height="40" fill="#2E322E"/><rect x="170" y="0" width="60" height="45" fill="#F4F8F8"/></g>
<g filter="url(#bl5)">
<path d="M92 142 C98 110 120 96 150 94 L190 94 C220 98 238 112 242 120 L242 142Z" fill="#151515"/>
<path d="M140 80 C142 96 150 102 158 102 C168 102 176 94 178 80Z" fill="#C8A696"/>
<ellipse cx="158" cy="44" rx="28" ry="38" fill="#D8BCAC"/>
<path d="M128 40 C126 16 140 4 158 4 C178 4 190 16 188 40" fill="none" stroke="#1E1E1E" stroke-width="3"/>
<rect x="119" y="30" width="12" height="28" rx="5" fill="#1A1A1A"/><rect x="184" y="24" width="14" height="32" rx="6" fill="#1A1A1A"/>
<ellipse cx="144" cy="42" rx="4.5" ry="1.8" fill="#5A4038"/><ellipse cx="166" cy="42" rx="4.5" ry="1.8" fill="#5A4038"/>
<path d="M144 62 C150 58 164 58 170 62" stroke="#8A6A5A" stroke-width="2.2" fill="none"/>
<path d="M132 62 C138 80 150 86 160 86 C170 86 180 80 184 62 C180 72 170 78 160 78 C150 78 138 72 132 62Z" fill="#B8A8A0"/>
</g></svg><div class="a" style="left:0;top:111.1px;width:235.8px;height:30.5px;background:rgba(22,22,22,0.66)"></div></div><div class="a" style="left:1678.6px;top:775.1px;width:241.4000000000001px;height:141.2px;overflow:hidden;background:#1C1C1C"><svg class="a" style="left:0;top:0" width="242" height="142" viewBox="0 0 242 142"><defs><filter id="bl6" x="-20%" y="-20%" width="140%" height="140%"><feGaussianBlur stdDeviation="0.9"/></filter><filter id="bb6" x="-50%" y="-50%" width="200%" height="200%"><feGaussianBlur stdDeviation="5"/></filter></defs><defs><linearGradient id="w6" x1="0" x2="1" y1="0" y2="0">
<stop offset="0" stop-color="#D2D2BA"/><stop offset="0.5" stop-color="#DAD9C4"/><stop offset="0.75" stop-color="#EAE9DD"/><stop offset="1" stop-color="#F7F7F2"/></linearGradient></defs>
<rect width="242" height="142" fill="url(#w6)"/>
<g filter="url(#bl6)">
<path d="M62 142 C70 114 92 98 120 94 L150 94 C190 98 208 116 216 142Z" fill="#A9A372"/>
<path d="M106 50 C106 84 116 108 132 108 C148 108 158 84 158 50Z" fill="#C08E7E"/>
<path d="M97 66 C90 34 104 12 130 12 C156 12 170 34 165 66 C160 52 156 44 148 40 C138 36 122 36 112 40 C104 44 100 54 97 66Z" fill="#A59D93"/>
<rect x="108" y="52" width="22" height="13" rx="3" fill="none" stroke="#3A2A28" stroke-width="2.2"/>
<rect x="134" y="52" width="22" height="13" rx="3" fill="none" stroke="#3A2A28" stroke-width="2.2"/>
<ellipse cx="119" cy="58" rx="3.5" ry="1.6" fill="#4A3030"/><ellipse cx="145" cy="58" rx="3.5" ry="1.6" fill="#4A3030"/>
<path d="M108 78 C112 100 122 112 132 112 C142 112 152 100 156 78 C150 88 142 94 132 94 C122 94 114 88 108 78Z" fill="#D8D2C8"/>
<path d="M118 80 C124 76 140 76 146 80" stroke="#8E8070" stroke-width="2.5" fill="none"/>
</g></svg><div class="a" style="left:0;top:110.69999999999999px;width:140.2px;height:30.5px;background:rgba(22,22,22,0.66)"></div></div><div class="a" style="left:1678.6px;top:926.7px;width:241.4000000000001px;height:141.2px;overflow:hidden;background:#1C1C1C"><svg class="a" style="left:0;top:0" width="242" height="142" viewBox="0 0 242 142"><defs><filter id="bl7" x="-20%" y="-20%" width="140%" height="140%"><feGaussianBlur stdDeviation="0.9"/></filter><filter id="bb7" x="-50%" y="-50%" width="200%" height="200%"><feGaussianBlur stdDeviation="5"/></filter></defs><defs><linearGradient id="w7" x1="0" x2="1" y1="0" y2="0">
<stop offset="0" stop-color="#A8B4AC"/><stop offset="0.18" stop-color="#CAD6D6"/><stop offset="0.45" stop-color="#D2DEDE"/>
<stop offset="0.6" stop-color="#B4C0BC"/><stop offset="0.75" stop-color="#C6D0CE"/><stop offset="1" stop-color="#B8C6C6"/></linearGradient>
<linearGradient id="c7" x1="0" x2="0" y1="0" y2="1"><stop offset="0" stop-color="#3A4244"/><stop offset="1" stop-color="#5A6260"/></linearGradient></defs>
<rect width="242" height="142" fill="url(#w7)"/>
<g filter="url(#bl7)">
<path d="M0 0 L242 0 L242 10 L150 14 L90 24 L0 28 Z" fill="url(#c7)"/>
<path d="M8 16 L55 12" stroke="#F4F8F8" stroke-width="3"/><path d="M70 9 L130 8" stroke="#F4F8F8" stroke-width="3"/><path d="M112 28 L140 30" stroke="#E4ECEC" stroke-width="2"/>
<rect x="1" y="42" width="22" height="72" fill="#807238"/>
<rect x="150" y="0" width="35" height="102" fill="#B69C6A"/>
<path d="M130 22 L150 0 L150 100 L130 100Z" fill="#7A6A4A"/>
<rect x="193" y="0" width="52" height="66" fill="#1E2222"/><rect x="196" y="0" width="50" height="62" fill="#CDD3D0"/><rect x="202" y="2" width="44" height="52" fill="#24302E"/><ellipse cx="218" cy="14" rx="8" ry="5" fill="#5A8A90"/>
<rect x="50" y="88" width="40" height="18" fill="#D8D0BE"/><rect x="48" y="100" width="40" height="14" fill="#2A2A2A"/>
<rect x="85" y="76" width="22" height="28" rx="4" fill="#3E7A70"/>
<rect x="172" y="97" width="50" height="8" fill="#D0DCE6"/><rect x="170" y="104" width="48" height="38" fill="#E6E2D4"/>
<path d="M66 142 C70 112 86 100 108 98 L132 98 C156 102 166 114 170 142Z" fill="#E6E4EC"/>
<path d="M101 62 C101 88 108 102 118 102 C128 102 136 88 136 62Z" fill="#C49C88"/>
<ellipse cx="118" cy="68" rx="18" ry="26" fill="#C8A08C"/>
<path d="M98 66 C96 46 104 38 118 38 C132 38 140 46 138 66 C134 54 128 50 118 50 C108 50 102 54 98 66Z" fill="#2A2220"/>
<path d="M96 70 C94 50 104 40 118 40 C132 40 142 50 140 70" fill="none" stroke="#E6E6E6" stroke-width="2.5"/>
<ellipse cx="110" cy="70" rx="3.5" ry="1.6" fill="#3A2A24"/><ellipse cx="126" cy="70" rx="3.5" ry="1.6" fill="#3A2A24"/>
</g></svg><div class="a" style="left:0;top:110.69999999999999px;width:163.9px;height:30.5px;background:rgba(22,22,22,0.66)"></div><svg class="a" style="left:5px;top:115.19999999999999px" width="24" height="22" viewBox="0 0 24 22"><rect x="8" y="2" width="7" height="11" rx="3.5" fill="#E2453F"/><path d="M5 9 C5 14 8 16 11.5 16 C15 16 18 14 18 9" fill="none" stroke="#E2453F" stroke-width="1.6"/><line x1="11.5" y1="16" x2="11.5" y2="20" stroke="#E2453F" stroke-width="1.6"/><line x1="7.5" y1="20" x2="15.5" y2="20" stroke="#E2453F" stroke-width="1.6"/><line x1="3" y1="21" x2="21" y2="3" stroke="#E2453F" stroke-width="2"/></svg></div><div class="a" style="left:1547.5px;top:521.5px;width:2px;height:41px;background:#C4C4C4"></div><div class="a" style="left:1552.5px;top:521.5px;width:2px;height:41px;background:#C4C4C4"></div><div class="t" id="t0" style="left:251.00px;top:45.57px;font-size:17.4px;color:#D3DFEE;-webkit-text-stroke:0.2px #D3DFEE;transform:scaleX(0.9613);">IRAMTemplate_DiscusionPublica (Dante Moreno-24-04) [Modo de compatibilidad]</div>
<div class="t" id="t1" style="left:868.50px;top:45.57px;font-size:17.4px;color:#D3DFEE;-webkit-text-stroke:0.2px #D3DFEE;">-</div>
<div class="t" id="t2" style="left:882.40px;top:45.57px;font-size:17.4px;color:#D3DFEE;-webkit-text-stroke:0.2px #D3DFEE;transform:scaleX(0.9770);">Word</div>
<div class="t" id="t3" style="left:1113.00px;top:46.57px;font-size:17.4px;color:#C9D7EA;-webkit-text-stroke:0.2px #C9D7EA;transform:scaleX(0.9691);">Dante Moreno</div>
<div class="t" id="t4" style="left:4.30px;top:92.57px;font-size:17.4px;color:#F4F7FB;-webkit-text-stroke:0.2px #F4F7FB;transform:scaleX(0.9647);">Disposición</div>
<div class="t" id="t5" style="left:127.00px;top:92.57px;font-size:17.4px;color:#F4F7FB;-webkit-text-stroke:0.2px #F4F7FB;transform:scaleX(0.9138);">Referencias</div>
<div class="t" id="t6" style="left:248.70px;top:92.57px;font-size:17.4px;color:#F4F7FB;-webkit-text-stroke:0.2px #F4F7FB;transform:scaleX(0.9551);">Correspondencia</div>
<div class="t" id="t7" style="left:412.60px;top:92.57px;font-size:17.4px;color:#F4F7FB;-webkit-text-stroke:0.2px #F4F7FB;transform:scaleX(0.8905);">Revisar</div>
<div class="t" id="t8" style="left:501.00px;top:92.57px;font-size:17.4px;color:#F4F7FB;-webkit-text-stroke:0.2px #F4F7FB;transform:scaleX(0.9515);">Vista</div>
<div class="t" id="t9" style="left:574.20px;top:92.57px;font-size:17.4px;color:#F4F7FB;-webkit-text-stroke:0.2px #F4F7FB;transform:scaleX(0.9878);">Ayuda</div>
<div class="t" id="t10" style="left:698.70px;top:92.57px;font-size:17.4px;color:#F4F7FB;-webkit-text-stroke:0.2px #F4F7FB;transform:scaleX(0.8880);">¿Qué desea hacer?</div>
<div class="t" id="t11" style="left:1433.70px;top:92.87px;font-size:17.4px;color:#FFFFFF;-webkit-text-stroke:0.2px #FFFFFF;transform:scaleX(0.9837);">Compartir</div>
<div class="t" id="t12" style="left:41.70px;top:145.67px;font-size:17.4px;color:#4a2a3a;transform:scaleX(0.7806);">11</div>
<div class="t" id="t13" style="left:180.40px;top:143.14px;font-size:18.5px;color:#555;-webkit-text-stroke:0.2px #555;transform:scaleX(0.9452);">Aa</div>
<div class="t" id="t14" style="left:36.60px;top:231.81px;font-size:15.7px;color:#3a3a3a;-webkit-text-stroke:0.2px #3a3a3a;transform:scaleX(1.0278);">Fuente</div>
<div class="t" id="t15" style="left:415.40px;top:231.81px;font-size:15.7px;color:#3a3a3a;-webkit-text-stroke:0.2px #3a3a3a;transform:scaleX(0.9990);">Párrafo</div>
<div class="t" id="t16" style="left:920.60px;top:231.81px;font-size:15.7px;color:#3a3a3a;-webkit-text-stroke:0.2px #3a3a3a;transform:scaleX(0.9844);">Estilos</div>
<div class="t" id="t17" style="left:1337.00px;top:231.81px;font-size:15.7px;color:#3a3a3a;-webkit-text-stroke:0.2px #3a3a3a;transform:scaleX(1.0262);">Edición</div>
<div class="t" id="t18" style="left:1326.00px;top:134.57px;font-size:17.4px;color:#3a3a3a;-webkit-text-stroke:0.2px #3a3a3a;transform:scaleX(0.8961);">Buscar</div>
<div class="t" id="t19" style="left:1326.00px;top:166.57px;font-size:17.4px;color:#3a3a3a;-webkit-text-stroke:0.2px #3a3a3a;transform:scaleX(0.9076);">Reemplazar</div>
<div class="t" id="t20" style="left:1326.00px;top:198.77px;font-size:17.4px;color:#3a3a3a;-webkit-text-stroke:0.2px #3a3a3a;transform:scaleX(0.9254);">Seleccionar</div>
<div class="t" id="t21" style="left:650.80px;top:150.99px;font-size:20.8px;color:#1e1e1e;-webkit-text-stroke:0.2px #1e1e1e;width:82.0px;overflow:hidden;">AaBbCcDd</div>
<div class="t" id="t22" style="left:751.40px;top:150.99px;font-size:20.8px;color:#1e1e1e;-webkit-text-stroke:0.2px #1e1e1e;font-weight:bold;width:82.0px;overflow:hidden;">AaBbCcDd</div>
<div class="t" id="t23" style="left:852.60px;top:150.99px;font-size:20.8px;color:#1e1e1e;-webkit-text-stroke:0.2px #1e1e1e;font-weight:bold;width:81.4px;overflow:hidden;">AaBbCcDd</div>
<div class="t" id="t24" style="left:952.80px;top:150.99px;font-size:20.8px;color:#1e1e1e;-webkit-text-stroke:0.2px #1e1e1e;width:81.2px;overflow:hidden;">AaBbCcDd</div>
<div class="t" id="t25" style="left:1053.50px;top:150.99px;font-size:20.8px;color:#1e1e1e;-webkit-text-stroke:0.2px #1e1e1e;width:81.5px;overflow:hidden;">AaBbCcDd</div>
<div class="t" id="t26" style="left:1154.00px;top:150.99px;font-size:20.8px;color:#1e1e1e;-webkit-text-stroke:0.2px #1e1e1e;width:82.0px;overflow:hidden;">AaBbCcDd</div>
<div class="t" id="t27" style="left:658.00px;top:187.27px;font-size:17.4px;color:#555;-webkit-text-stroke:0.2px #555;transform:scaleX(0.9656);">¶ Normal</div>
<div class="t" id="t28" style="left:759.50px;top:187.27px;font-size:17.4px;color:#555;-webkit-text-stroke:0.2px #555;transform:scaleX(0.9157);">¶ Título 1</div>
<div class="t" id="t29" style="left:860.30px;top:187.27px;font-size:17.4px;color:#555;-webkit-text-stroke:0.2px #555;transform:scaleX(0.9366);">¶ Título 2</div>
<div class="t" id="t30" style="left:960.50px;top:187.27px;font-size:17.4px;color:#555;-webkit-text-stroke:0.2px #555;transform:scaleX(0.9296);">¶ Título 3</div>
<div class="t" id="t31" style="left:1061.50px;top:187.27px;font-size:17.4px;color:#555;-webkit-text-stroke:0.2px #555;transform:scaleX(0.9296);">¶ Título 4</div>
<div class="t" id="t32" style="left:1152.50px;top:187.27px;font-size:17.4px;color:#555;-webkit-text-stroke:0.2px #555;transform:scaleX(0.8800);">¶ Sin espa...</div>
<div class="t" id="t33" style="left:-11.00px;top:292.09px;font-size:18.2px;color:#262626;-webkit-text-stroke:0.35px #262626;transform:scaleX(1.0312);">Observaciones</div>
<div class="t" id="t34" style="left:765.30px;top:318.89px;font-size:17.5px;color:#262626;-webkit-text-stroke:0.35px #262626;transform:scaleX(0.9992);">Fecha</div>
<div class="t" id="t35" style="left:1043.40px;top:318.69px;font-size:17.5px;color:#262626;-webkit-text-stroke:0.35px #262626;transform:scaleX(1.0438);">Esquema de Norma IRAM</div>
<div class="t" id="t36" style="left:10.40px;top:382.30px;font-size:15px;color:#262626;-webkit-text-stroke:0.35px #262626;transform:scaleX(1.0402);">Capítulo /</div>
<div class="t" id="t37" style="left:10.40px;top:401.70px;font-size:15px;color:#262626;-webkit-text-stroke:0.35px #262626;transform:scaleX(1.0396);">Apartado</div>
<div class="t" id="t38" style="left:10.40px;top:433.70px;font-size:15px;color:#262626;-webkit-text-stroke:0.35px #262626;transform:scaleX(1.0185);">(ej. 3.1)</div>
<div class="t" id="t39" style="left:123.40px;top:382.30px;font-size:15px;color:#262626;-webkit-text-stroke:0.35px #262626;transform:scaleX(1.0645);">Párrafo/</div>
<div class="t" id="t40" style="left:123.40px;top:401.70px;font-size:15px;color:#262626;-webkit-text-stroke:0.35px #262626;transform:scaleX(1.0237);">Figura/ Tabla</div>
<div class="t" id="t41" style="left:123.40px;top:433.70px;font-size:15px;color:#262626;-webkit-text-stroke:0.35px #262626;transform:scaleX(1.0152);">(ej. Tabla 1)</div>
<div class="t" id="t42" style="left:236.60px;top:382.30px;font-size:15px;color:#262626;-webkit-text-stroke:0.35px #262626;transform:scaleX(1.0169);">Tipo de observación</div>
<div class="t" id="t43" style="left:236.60px;top:401.70px;font-size:15px;color:#262626;-webkit-text-stroke:0.35px #262626;transform:scaleX(1.1400);">(*):</div>
<div class="t" id="t44" style="left:394.60px;top:382.10px;font-size:15px;color:#262626;-webkit-text-stroke:0.35px #262626;transform:scaleX(1.0096);">Observaciones y Fundamentación</div>
<div class="t" id="t45" style="left:728.50px;top:382.30px;font-size:15px;color:#262626;-webkit-text-stroke:0.35px #262626;transform:scaleX(1.0182);">Cambio Propuesto</div>
<div class="t" id="t46" style="left:1124.90px;top:381.70px;font-size:15px;color:#262626;-webkit-text-stroke:0.35px #262626;transform:scaleX(0.9805);">Resolución del OE -</div>
<div class="t" id="t47" style="left:1124.90px;top:412.40px;font-size:15px;color:#262626;-webkit-text-stroke:0.35px #262626;transform:scaleX(1.0059);">Organismo de Estudio -</div>
<div class="t" id="t48" style="left:10.40px;top:466.10px;font-size:15px;color:#262626;-webkit-text-stroke:0.35px #262626;transform:scaleX(0.9216);">PARTE 1 -</div>
<div class="t" id="t49" style="left:10.40px;top:485.80px;font-size:15px;color:#262626;-webkit-text-stroke:0.35px #262626;transform:scaleX(0.8921);">REQUISITOS</div>
<div class="t" id="t50" style="left:10.40px;top:505.00px;font-size:15px;color:#262626;-webkit-text-stroke:0.35px #262626;transform:scaleX(0.7788);">Y</div>
<div class="t" id="t51" style="left:10.40px;top:524.40px;font-size:15px;color:#262626;-webkit-text-stroke:0.35px #262626;transform:scaleX(0.9270);">RECOMENDA</div>
<div class="t" id="t52" style="left:10.40px;top:544.30px;font-size:15px;color:#262626;-webkit-text-stroke:0.35px #262626;transform:scaleX(0.8867);">CIONES</div>
<div class="t" id="t53" style="left:10.40px;top:576.00px;font-size:15px;color:#262626;-webkit-text-stroke:0.35px #262626;transform:scaleX(0.9132);">INTRODUCCI</div>
<div class="t" id="t54" style="left:10.40px;top:595.70px;font-size:15px;color:#262626;-webkit-text-stroke:0.35px #262626;transform:scaleX(0.9422);">ÓN</div>
<div class="t" id="t55" style="left:123.40px;top:467.30px;font-size:15px;color:#262626;-webkit-text-stroke:0.35px #262626;transform:scaleX(1.0510);">7mo párrafo</div>
<div class="t" id="t56" style="left:236.60px;top:461.90px;font-size:15px;color:#262626;-webkit-text-stroke:0.35px #262626;transform:scaleX(0.9886);">General (G)</div>
<div class="t" id="t57" style="left:394.60px;top:467.00px;font-size:15px;color:#262626;-webkit-text-stroke:0.35px #262626;transform:scaleX(1.0204);">Ausencia de mención de la “gobernanza”</div>
<div class="t" id="t58" style="left:394.60px;top:486.70px;font-size:15px;color:#262626;-webkit-text-stroke:0.35px #262626;transform:scaleX(1.0421);">como modelo e instrumento de gobierno del</div>
<div class="t" id="t59" style="left:394.60px;top:507.30px;font-size:15px;color:#262626;-webkit-text-stroke:0.35px #262626;transform:scaleX(1.0054);">ecosistema, su vida y su evolución</div>
<div class="t" id="t60" style="left:728.50px;top:467.30px;font-size:15px;color:#262626;-webkit-text-stroke:0.35px #262626;transform:scaleX(1.0212);">La cuarta revolución industrial tiene a las tecnologías</div>
<div class="t" id="t61" style="left:728.50px;top:486.90px;font-size:15px;color:#262626;-webkit-text-stroke:0.35px #262626;transform:scaleX(1.0002);">digitales.......... de grandes volúmenes de datos; por lo</div>
<div class="t" id="t62" style="left:728.50px;top:507.70px;font-size:15px;color:#262626;-webkit-text-stroke:0.35px #262626;transform:scaleX(1.0121);">tanto es necesario <i>una gobernanza ecosistémica</i></div>
<div class="t" id="t63" style="left:728.50px;top:528.50px;font-size:15px;color:#262626;-webkit-text-stroke:0.35px #262626;transform:scaleX(1.0083);"><i>centrado</i> en la persona y en sus derechos humanos,</div>
<div class="t" id="t64" style="left:728.50px;top:547.90px;font-size:15px;color:#262626;-webkit-text-stroke:0.35px #262626;transform:scaleX(1.0012);">.......... y las futuras inteligencias digitales de enjambre.</div>
<div class="t" id="t65" style="left:728.50px;top:580.60px;font-size:15px;color:#262626;-webkit-text-stroke:0.35px #262626;transform:scaleX(0.9737);">En&nbsp; <b>3.1 Términos y definiciones</b>, se define:</div>
<div class="t" id="t66" style="left:728.50px;top:611.90px;font-size:15px;color:#262626;-webkit-text-stroke:0.35px #262626;transform:scaleX(1.0102);">3.1.23&nbsp; gobernanza</div>
<div class="t" id="t67" style="left:728.50px;top:643.10px;font-size:15px;color:#262626;-webkit-text-stroke:0.35px #262626;transform:scaleX(1.0210);">la gobernanza del EDI está definida por un conjunto de</div>
<div class="t" id="t68" style="left:728.50px;top:663.10px;font-size:15px;color:#262626;-webkit-text-stroke:0.35px #262626;transform:scaleX(1.0171);">principios, normas, reglas, procesos de toma de</div>
<div class="t" id="t69" style="left:728.50px;top:683.30px;font-size:15px;color:#262626;-webkit-text-stroke:0.35px #262626;transform:scaleX(1.0231);">decisión y funciones que, implementados y aplicados</div>
<div class="t" id="t70" style="left:728.50px;top:703.10px;font-size:15px;color:#262626;-webkit-text-stroke:0.35px #262626;transform:scaleX(1.0326);">de forma coordinada, definen su evolución</div>
<div class="t" id="t71" style="left:728.50px;top:735.40px;font-size:15px;color:#262626;-webkit-text-stroke:0.35px #262626;transform:scaleX(1.0092);">Esta “gobernanza” propuesta es muy específica, es de</div>
<div class="t" id="t72" style="left:728.50px;top:756.30px;font-size:15px;color:#262626;-webkit-text-stroke:0.35px #262626;transform:scaleX(1.0315);">un ecosistema digital:</div>
<div class="t" id="t73" style="left:728.50px;top:787.50px;font-size:15px;color:#262626;-webkit-text-stroke:0.35px #262626;transform:scaleX(1.0208);">3.1.18 ecosistema digital</div>
<div class="t" id="t74" style="left:728.50px;top:817.90px;font-size:15px;color:#262626;-webkit-text-stroke:0.35px #262626;transform:scaleX(1.0098);">entorno de organizaciones y sus sistemas digitales,</div>
<div class="t" id="t75" style="left:728.50px;top:837.70px;font-size:15px;color:#262626;-webkit-text-stroke:0.35px #262626;transform:scaleX(1.0273);">débilmente acoplados, agrupados en dominios con</div>
<div class="t" id="t76" style="left:728.50px;top:857.30px;font-size:15px;color:#262626;-webkit-text-stroke:0.35px #262626;transform:scaleX(1.0174);">servicios disponibles, impulsados por la demanda y</div>
<div class="t" id="t77" style="left:728.50px;top:876.70px;font-size:15px;color:#262626;-webkit-text-stroke:0.35px #262626;transform:scaleX(1.0278);">autoorganizados</div>
<div class="t" id="t78" style="left:728.50px;top:909.00px;font-size:15px;color:#262626;-webkit-text-stroke:0.35px #262626;transform:scaleX(1.0052);">Nota 1 a la entrada: El ecosistema digital es escalable y</div>
<div class="t" id="t79" style="left:728.50px;top:928.80px;font-size:15px;color:#262626;-webkit-text-stroke:0.35px #262626;transform:scaleX(1.0120);">sustentable; cada organización miembro del EDI es</div>
<div class="t" id="t80" style="left:728.50px;top:949.60px;font-size:15px;color:#262626;-webkit-text-stroke:0.35px #262626;transform:scaleX(1.0332);">proactiva y receptiva para su propio beneficio o</div>
<div class="t" id="t81" style="left:728.50px;top:969.00px;font-size:15px;color:#262626;-webkit-text-stroke:0.35px #262626;transform:scaleX(0.9883);">ganancia.</div>
<div class="t" id="t82" style="left:-0.50px;top:1028.53px;font-size:16.5px;color:#3a3a3a;-webkit-text-stroke:0.2px #3a3a3a;transform:scaleX(0.9010);">ñol (España)</div>
<div class="t" id="t83" style="left:135.80px;top:1028.53px;font-size:16.5px;color:#3a3a3a;-webkit-text-stroke:0.2px #3a3a3a;transform:scaleX(0.9944);">Accesibilidad: No disponible</div>
<div class="t" id="t84" style="left:1494.50px;top:1027.23px;font-size:16.5px;color:#3a3a3a;-webkit-text-stroke:0.2px #3a3a3a;transform:scaleX(0.8838);">100%</div>
<div class="t" id="t85" style="left:1686.30px;top:133.93px;font-size:20.4px;color:#FFFFFF;-webkit-text-stroke:0.2px #FFFFFF;transform:scaleX(0.9393);">Horacio Luz Clara</div>
<div class="t" id="t86" style="left:1715.20px;top:286.13px;font-size:20.4px;color:#FFFFFF;-webkit-text-stroke:0.2px #FFFFFF;transform:scaleX(0.8991);">PAULA M. ANGELERI</div>
<div class="t" id="t87" style="left:1685.50px;top:437.13px;font-size:20.4px;color:#FFFFFF;-webkit-text-stroke:0.2px #FFFFFF;transform:scaleX(0.9661);">Gustavo Giorgetti</div>
<div class="t" id="t88" style="left:1686.00px;top:589.13px;font-size:20.4px;color:#FFFFFF;-webkit-text-stroke:0.2px #FFFFFF;transform:scaleX(0.9735);">Dante Moreno</div>
<div class="t" id="t89" style="left:1685.50px;top:741.13px;font-size:20.4px;color:#FFFFFF;-webkit-text-stroke:0.2px #FFFFFF;transform:scaleX(0.9335);">Carlos Parody - La Pampa</div>
<div class="t" id="t90" style="left:1685.50px;top:892.43px;font-size:20.4px;color:#FFFFFF;-webkit-text-stroke:0.2px #FFFFFF;transform:scaleX(0.9433);">Jorge Ceballos</div>
<div class="t" id="t91" style="left:1715.00px;top:1044.13px;font-size:20.4px;color:#FFFFFF;-webkit-text-stroke:0.2px #FFFFFF;transform:scaleX(0.9729);">Danny Muñoz</div>
</body></html>
